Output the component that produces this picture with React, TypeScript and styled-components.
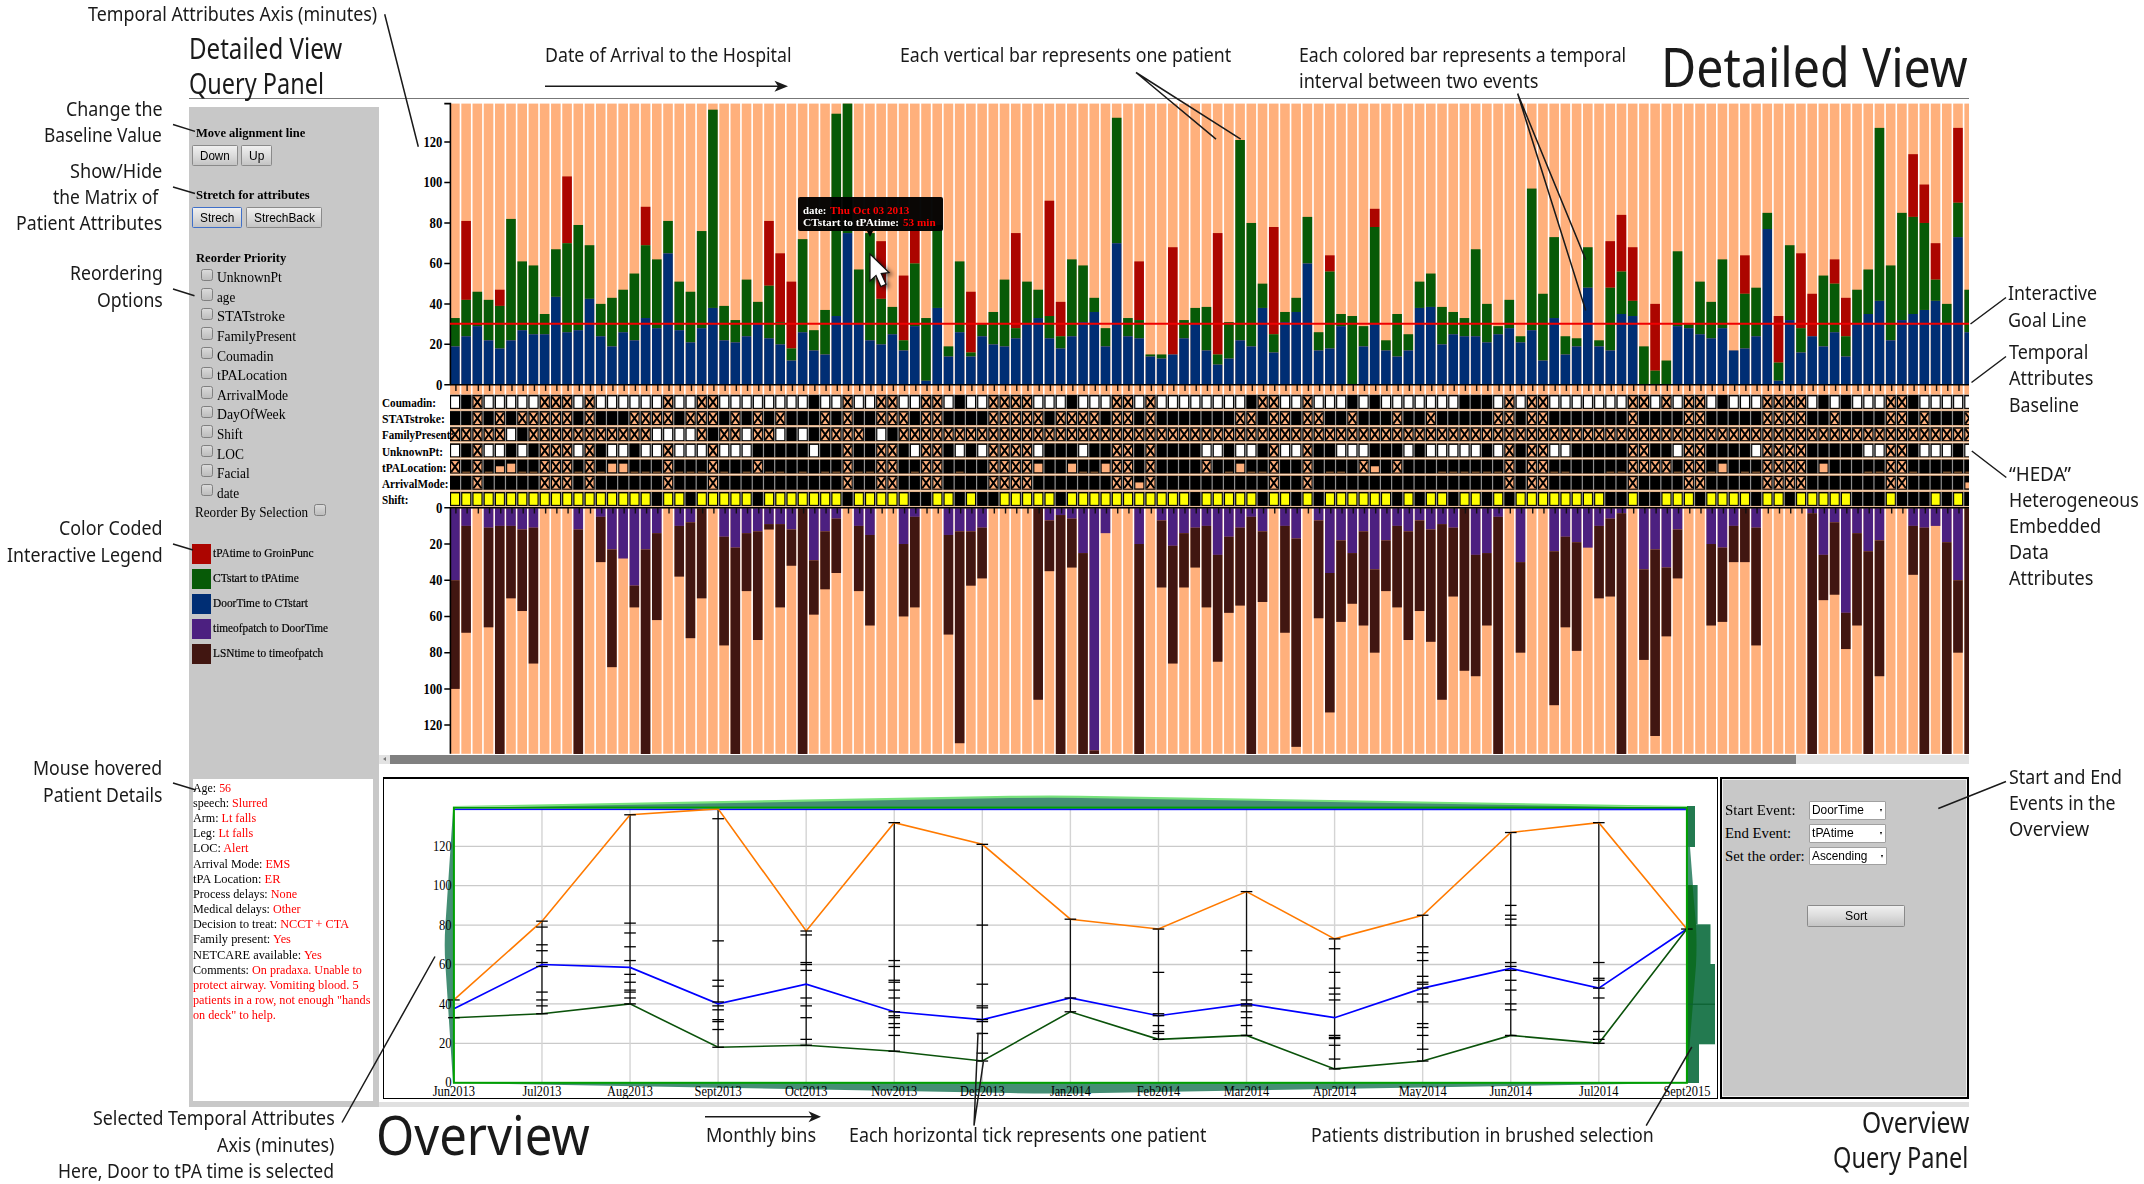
import React, { ReactNode, useLayoutEffect, useRef, useState } from "react";
import styled, { createGlobalStyle } from "styled-components";

const SERIF = '"Liberation Serif", "Times New Roman", serif';
const SANS = '"Liberation Sans", Arial, sans-serif';
const LABEL = '"Noto Sans", "Open Sans", sans-serif';

const C = {
  tan: "#ffb07c",
  red: "#ac0500",
  green: "#075a07",
  blue: "#002e74",
  purple: "#4c2080",
  brown: "#411611",
  panel: "#c8c8c8",
  ink: "#1a1a1a",
};

const Global = createGlobalStyle`
  * { box-sizing: border-box; }
  html, body { margin: 0; padding: 0; background: #fff; }
  body { width: 2144px; height: 1184px; overflow: hidden; }
`;

/* ---------- text set to a given measure ---------- */

const FitBox = styled.span<{ $w: number }>`
  display: inline-block;
  width: ${(p) => p.$w}px;
  white-space: pre;
  flex: none;
`;
const FitInner = styled.span`
  display: inline-block;
  transform-origin: 0 50%;
`;

function Fit({ w, children }: { w: number; children: ReactNode }) {
  const ref = useRef<HTMLSpanElement>(null);
  const [k, setK] = useState(1);
  useLayoutEffect(() => {
    if (ref.current) setK(w / ref.current.offsetWidth);
  }, [w]);
  return (
    <FitBox $w={w}>
      <FitInner ref={ref} style={{ transform: `scaleX(${k})` }}>
        {children}
      </FitInner>
    </FitBox>
  );
}

/* ---------- patient data, in minutes ---------- */

// door to CT, door to tPA, door to groin puncture
const ABOVE =
  "19,33 24,42,81 29,46 22,42 18,39,47 22,82 27,61 25,59 25,35 43.5,67 " +
  "26,70,103 27,79 42.5,69 24,40 19,43 26,47 22,55 33,69,88 28,62 65,81 " +
  "27,51 21,46 28,76 38,136 22,39 21,32 24,52 30,41 23,49,81 20,31,65 " +
  "12,18,51 26,72 17,27 15,37 34,134 75,139 30,57 22,75 20,42.5,71 25,38.5 " +
  "17,22,54 29,60,81 2,33 38,79 14,19 26,61 14,16,46 24,30 20,36 19,52 " +
  "23,28,75 30,51 33,47 23,34,91 18,24,41 24,62 31,59 36,43 19,28 70,132 " +
  "24,33 23,32,61 14,15 13,15 15,15,68 23,32 30,38 17,38.5 10,15,75 13,31 " +
  "22,121 19,80 38,50 16,25,78 31,36 36,43 60,83 17,26 18,56,64 29,35 " +
  "0,34 19,29 30,78,87 17,22 14,35 17,25 38,51 38.5,55 20,38.5 25,36 " +
  "24,33 24,67 21,40 25,29 28,42 21,24 27,97 12,45 33,73 15,24 " +
  "19,23 48,68 19,22 17,48,71 35,56,84 34,41.5,68 0,19 0,7,40 0,12 29,66 " +
  "28,30 25,51 23,41 28,62 17,17 18,45,64 24,48 77,85 2,11,34 32,69 " +
  "16,28,65 24,24,45 19,54 26,50,62 14,24,43 30,47 35,57 41.5,127 22,59 32,85 " +
  "35,83,114 37,80,99 41.5,52,70 30,40 73,90,127 26,47";

// patch to door, last seen normal to door
const BELOW =
  "40,100 10,69 - 11,66 10,136 10,50 12,57 11,86 - - " +
  "- 12,136 - 5,30 23,88 28,28 43,55 23,136 14,62 - " +
  "10,38 8,72 0,50 - 16,76 22,136 14,46 13,73 9,12 9,55 " +
  "12,32 0,136 29,59 13,45 6,36 - 10,46 15,65 - - " +
  "20,60 5,55 - - 15,70 13,130 13,43 11,39 - - " +
  "- - 0,106 7,35 4,136 6,33 25,136 134,136 14,14 - " +
  "- 20,136 - 7,44 21,86 14,44 11,33 10,55 26,85 16,58 " +
  "11,54 5,136 13,52 - 10,69 17,132 - 7,61 36,113 18,63 " +
  "25,53 13,65 34,80 18,46 10,55 13,73 7,57 12,74 9,106 11,49 " +
  "0,90 26,93 25,65 5,136 - 30,80 - - 24,109 16,66 " +
  "19,79 22,22 10,50 6,49 3,136 - 34,84 23,126 33,71 12,39 " +
  "- - 20,65 22,63 10,30 0,30 11,76 - - - " +
  "- 3,136 26,51 8,48 58,78 14,65 24,136 18,93 - - " +
  "10,37 11,136 10,10 19,136 40,80 0,136";

// W yes, B no, X missing, Y day shift, _ lowest level, s and t partial levels
const MATRIX: [string, number, string][] = [
  ["Coumadin:", 54,
    "WBXWWWWWXX" + "XWXWWWWWWX" + "WWXXWWWWWW" + "WWBWWXWWXX" + "WWXXWBWWXX" + "XXWWWBWWWX" +
    "XWXWWWWWWW" + "WBXXWWXWWW" + "BWBWWWWWWW" + "BBBWXWXXWW" + "WWWWWXXWXW" + "XXWBWWWXXX" + "XWBWBWWWXX" + "BWWWWW"],
  ["STATstroke:", 63,
    "BBXBXBXXXX" + "XBXBBBXXXX" + "BXXXBXBXBX" + "BBBXBXBBXX" + "XBXXBBBBXX" + "XXXBXXXXBX" +
    "XBXBBBBBBB" + "XXBXXBXXBB" + "XBBBXBBXBB" + "BBBXXBXXBB" + "BBBBBXBBBB" + "XXBBBBBXXX" + "XBBXBBBBXX" + "BXBBBX"],
  ["FamilyPresent:", 72,
    "XXXXXWBXXX" + "XXXXXXXXWW" + "WWXBXXWXXW" + "BWBXXXXBWB" + "X".repeat(96)],
  ["UnknownPt:", 61,
    "WBXWWBWBXX" + "XWXBWWBWWX" + "WWWXWWWBBB" + "BBWBBXBBXX" + "BWXXBWBWXX" + "XXWBBBWBBX" +
    "XBXBBBBWWB" + "WWBXWWXBBW" + "WWBBBWBWWW" + "WWBWXBXXWW" + "BBBBBXXBBW" + "XXBBBBWXXX" + "XBBBBBWWXX" + "BWWWBW"],
  ["tPALocation:", 64.5,
    "X_X_st__XX" + "X_X_tt___X" + "___X_B_X__" + "B_B__X__XX" + "B_XXB_BBXX" + "XXtBBt__tX" +
    "XBXBBBBXB_" + "t__XBBXB__" + "BXsBXBBB__" + "____XBXX__" + "BBB__XXXX_" + "XX_tB__XXX" + "XBtBBB__XX" + "_BB___"],
  ["ArrivalMode:", 66.5,
    "BBXBBBBBXX" + "XBXBBBBBBX" + "BBBXBBBBBB" + "BBBBBXBBXX" + "BBXXBBBBXX" + "XXBBBBBBBX" +
    "XsXBBBBBBB" + "BBBXBBXBBB" + "BBBBBBBBBB" + "BBBBXBXXBB" + "BBBBBXBBBB" + "XXBBBBBXXX" + "XBBBBBBBXX" + "BBBBBs"],
  ["Shift:", 26.5,
    "YYYYYYYYYY" + "YYYYYYYYBY" + "YBYYYYYBYY" + "YYYYYBYYYY" + "YBBYYBYBBY" + "YYYYBYYYYY" +
    "YYYYYYBYYY" + "YYBYYBYBYY" + "YYYYBYBYYB" + "YYBYBYYYYY" + "YYYBBYBBYY" + "YBYYYYBYYB" + "YYYYYBBBYB" + "BBYBYB"],
];

const above = ABOVE.split(" ").map((s) => s.split(",").map(Number));
const below = BELOW.split(" ").map((s) => (s === "-" ? [0, 0] : s.split(",").map(Number)));

/* ---------- detailed view ---------- */

const X0 = 450.1;
const PITCH = 11.217;
const BAR = 9.6;
const UP0 = 384.8;
const UPK = 2.023;
const DN0 = 507.8;
const DNK = 1.811;
const ROW0 = 395;
const ROWH = 16.17;
const colX = (i: number) => X0 + i * PITCH;

const ChartSvg = styled.svg`
  display: block;
  width: 1590px;
  height: 655px;
`;
const AxisText = styled.text`
  font: bold 14px ${SERIF};
  text-anchor: end;
`;
const RowText = styled.text`
  font: bold 12.4px ${SERIF};
`;

function Cell({ kind, x, y }: { kind: string; x: number; y: number }) {
  const fill = kind === "W" ? "#fff" : kind === "Y" ? "#ff0" : kind === "X" ? C.tan : "#000";
  return (
    <g>
      <rect x={x - 0.1} y={y} width={10} height={14} fill="#000" />
      {"WYX".includes(kind) && <rect x={x + 1} y={y + 1.4} width={7.9} height={11.4} fill={fill} />}
      {kind === "X" && (
        <path
          d={`M${x + 1} ${y + 1.8}l7.8 10.6M${x + 8.8} ${y + 1.8}l-7.8 10.6`}
          stroke="#000"
          strokeWidth={2}
        />
      )}
      {kind === "_" && <rect x={x + 1} y={y + 12} width={7.8} height={1} fill="#a8703f" />}
      {kind === "s" && <rect x={x + 1} y={y + 6.6} width={8} height={6} fill={C.tan} />}
      {kind === "t" && <rect x={x + 1} y={y + 4} width={8} height={8.6} fill={C.tan} />}
    </g>
  );
}

function DetailedChart() {
  return (
    <ChartSvg viewBox="379 99 1590 655">
      {above.map(([b, g, r], i) => {
        const x = colX(i);
        const y = (v: number) => UP0 - v * UPK;
        return (
          <g key={i}>
            <rect x={x} y={103.6} width={BAR} height={650.2} fill={C.tan} />
            {r !== undefined && <rect x={x} y={y(r)} width={BAR} height={(r - g) * UPK} fill={C.red} />}
            {g > b && <rect x={x} y={y(g)} width={BAR} height={(g - b) * UPK} fill={C.green} />}
            {b > 0 && <rect x={x} y={y(b)} width={BAR} height={b * UPK} fill={C.blue} />}
          </g>
        );
      })}
      {below.map(([p, n], i) => (
        <g key={i}>
          {p > 0 && <rect x={colX(i)} y={DN0} width={BAR} height={p * DNK} fill={C.purple} />}
          {n > p && <rect x={colX(i)} y={DN0 + p * DNK} width={BAR} height={(n - p) * DNK} fill={C.brown} />}
        </g>
      ))}
      <rect x={450} y={394.5} width={1519} height={112.5} fill="#909090" />
      {MATRIX.map(([name, w, row], r) => (
        <g key={name}>
          {row.split("").map((k, i) => (
            <Cell key={i} kind={k} x={colX(i)} y={ROW0 + r * ROWH} />
          ))}
          <rect x={450} y={ROW0 + r * ROWH + 13.9} width={1519} height={2.3} fill="#c98a5c" />
          <rect x={450} y={ROW0 + r * ROWH + 14.4} width={1519} height={1.2} fill="#ffe2c4" />
          <RowText x={382} y={407 + r * ROWH} textLength={w} lengthAdjust="spacingAndGlyphs">
            {name}
          </RowText>
        </g>
      ))}
      {above.map((_, i) => (
        <path
          key={i}
          d={`M${colX(i) + 5.8} ${UP0}v6.2M${colX(i) + 5.8} ${DN0}v5.6`}
          stroke="#111"
          strokeWidth={1.4}
        />
      ))}
      <path d={`M450 ${UP0}H1969M450 ${DN0}H1969`} stroke="#000" strokeWidth={1.6} />
      <path d={`M444.3 103.6H450.4V${UP0}M450.4 ${DN0}V753.8`} stroke="#000" strokeWidth={1.6} fill="none" />
      {[0, 20, 40, 60, 80, 100, 120].map((v) => {
        const len = v > 99 ? 18.8 : v ? 12.8 : 6.4;
        return (
          <g key={v}>
            <path d={`M444.3 ${UP0 - v * UPK}h6M444.3 ${DN0 + v * DNK}h6`} stroke="#000" strokeWidth={1.5} />
            <AxisText x={442.3} y={UP0 - v * UPK + 4.8} textLength={len} lengthAdjust="spacingAndGlyphs">{v}</AxisText>
            <AxisText x={442.3} y={DN0 + v * DNK + 4.8} textLength={len} lengthAdjust="spacingAndGlyphs">{v}</AxisText>
          </g>
        );
      })}
      <path d="M450 323.8H1969" stroke="#f00000" strokeWidth={2} />
    </ChartSvg>
  );
}

/* ---------- overview ---------- */

const MONTHS: { name: string; w: number; max: number; med: number; min: number; ticks: number[] }[] = [
  { name: "Jun2013", w: 42.5, max: 42, med: 37.5, min: 33, ticks: [42, 33] },
  { name: "Jul2013", w: 39, max: 82, med: 60, min: 35, ticks: [82, 79, 70, 67, 61, 59, 46, 42, 39, 35] },
  { name: "Aug2013", w: 46, max: 136, med: 58.5, min: 40, ticks: [136, 81, 76, 69, 62, 55, 51, 47, 46, 43, 40] },
  { name: "Sept2013", w: 47, max: 139, med: 40, min: 18, ticks: [134, 72, 52, 49, 41, 39, 37, 32, 31, 27, 18] },
  { name: "Oct2013", w: 42.5, max: 77, med: 50, min: 19, ticks: [77, 75, 61, 60, 57, 43, 39, 33, 22, 19] },
  { name: "Nov2013", w: 46, max: 132, med: 36, min: 16, ticks: [132, 62, 59, 52, 51, 47, 43, 36, 34, 33, 30, 28, 24, 16] },
  { name: "Dec2013", w: 44.5, max: 121, med: 32, min: 11, ticks: [121, 80, 50, 39, 38, 32, 31, 25, 15, 11] },
  { name: "Jan2014", w: 41, max: 83, med: 43, min: 36, ticks: [83, 43, 36] },
  { name: "Feb2014", w: 43.5, max: 78, med: 34, min: 22, ticks: [78, 56, 35, 34, 29, 26, 25, 22] },
  { name: "Mar2014", w: 45.5, max: 97, med: 40, min: 24, ticks: [97, 67, 55, 51, 42, 40, 39, 36, 33, 29, 24] },
  { name: "Apr2014", w: 43.5, max: 73, med: 33, min: 7, ticks: [73, 68, 56, 48, 45, 42, 24, 23, 22.4, 19, 12, 7] },
  { name: "May2014", w: 48, max: 85, med: 48, min: 11, ticks: [85, 69, 66, 62, 54, 51, 50, 48, 45, 41, 30, 28, 24, 17, 11] },
  { name: "Jun2014", w: 42.5, max: 127, med: 58, min: 24, ticks: [127, 90, 85, 83, 80, 61, 59, 57, 52, 47, 40, 37, 24] },
  { name: "Jul2014", w: 39.5, max: 132, med: 48, min: 20, ticks: [132, 61, 53, 52, 48, 43, 26, 22, 20] },
  { name: "Sept2015", w: 47, max: 78, med: 78, min: 78, ticks: [78] },
];

const mx = (i: number) => 453.9 + i * 88.07;
const my = (v: number) => 1082.7 - v * 1.97;
const line = (key: "max" | "med" | "min") => MONTHS.map((m, i) => `${mx(i)},${my(m[key])}`).join(" ");

const OverviewFrame = styled.div`
  width: 1335px;
  height: 322px;
  border: solid #000;
  border-width: 2px 1px 1px 1px;
`;
const OverviewSvg = styled.svg`
  display: block;
  width: 1333px;
  height: 319px;
`;
const OvText = styled.text<{ $end?: boolean }>`
  font: 13.8px ${SERIF};
  text-anchor: ${(p) => (p.$end ? "end" : "middle")};
`;

const DISTRIBUTION: [number, number, number][] = [
  [806, 41, 1695], [885, 39.5, 1697.6], [924.3, 40.5, 1710.5], [964, 40, 1715], [1004, 40.3, 1715], [1043, 40, 1699],
];

function OverviewChart() {
  return (
    <OverviewSvg viewBox="384 779 1333 319">
      {[20, 40, 60, 80, 100, 120].map((v) => (
        <path key={v} d={`M454 ${my(v)}H1687`} stroke="#cacaca" strokeWidth={1.3} />
      ))}
      {MONTHS.map((m, i) => (
        <path key={m.name} d={`M${mx(i)} 809V1083`} stroke="#d4d4d4" strokeWidth={1.4} />
      ))}
      <path d="M454 806L1010 795.8Q1060 795 1110 796.2L1687 806z" fill="#78e27c" />
      <path d="M454 808L1010 798Q1060 797.2 1110 798.4L1687 808z" fill="#448e74" />
      <path d="M454 1083L1010 1093Q1050 1094 1100 1093L1687 1083z" fill="#448e74" />
      <path d="M453 810L445.4 925Q444 945 445.4 965L453 1083z" fill="#448e74" />
      <path d="M1687 808L1691 860L1696 925Q1697 945 1696 965L1690 1040L1687 1083z" fill="#448e74" />
      {DISTRIBUTION.map(([y, h, x]) => (
        <rect key={y} x={1687} y={y} width={x - 1687} height={h} fill="#237a50" />
      ))}
      <path d="M1687 885V1083L1690 1040L1696 965Q1697 945 1696 925L1692.5 885z" fill="#0d6c24" />
      <path d="M1687 1004.2H1715" stroke="#0b6030" strokeWidth={1.2} />
      {MONTHS.map((m, i) => (
        <OvText key={m.name} x={mx(i)} y={1096} textLength={m.w} lengthAdjust="spacingAndGlyphs">
          {m.name}
        </OvText>
      ))}
      {[0, 20, 40, 60, 80, 100, 120].map((v) => (
        <OvText key={v} $end x={451.6} y={my(v) + 4.6} textLength={v > 99 ? 18.6 : v ? 12.6 : 6.4} lengthAdjust="spacingAndGlyphs">
          {v}
        </OvText>
      ))}
      <path d="M454 809L1687 808.6V809.8L454 809.6z" fill="#00f" stroke="#00f" strokeWidth={0.9} />
      {MONTHS.map((m, i) => (
        <g key={m.name} stroke="#111">
          {i > 0 && i < 14 && <path d={`M${mx(i)} ${my(m.max)}V${my(m.min)}`} strokeWidth={1.3} />}
        </g>
      ))}
      <polyline points={line("max")} fill="none" stroke="#ff7a00" strokeWidth={1.6} />
      <polyline points={line("med")} fill="none" stroke="#0000ff" strokeWidth={1.7} />
      <polyline points={line("min")} fill="none" stroke="#0a520a" strokeWidth={1.6} />
      {MONTHS.map((m, i) =>
        m.ticks.map((v) => (
          <path key={`${i}-${v}`} d={`M${mx(i) - 5.8} ${my(v)}h11.6`} stroke="#000" strokeWidth={1.3} />
        )),
      )}
      <rect x={453.9} y={807.6} width={1233} height={275.2} fill="none" stroke="#00a000" strokeWidth={2} />
    </OverviewSvg>
  );
}

/* ---------- shell ---------- */

const Page = styled.div`
  position: relative;
  width: 2144px;
  height: 1184px;
  padding: 98px 0 0 189px;
  overflow: hidden;
  background: #fff;
  color: #000;
`;
const Shell = styled.div`
  width: 1780px;
  border-top: 1px solid #777;
  display: grid;
  grid-template-columns: 190px 1590px;
`;
const Sidebar = styled.aside`
  height: 1000px;
  margin-top: 8px;
  padding: 18px 0 0 3px;
  background: ${C.panel};
  display: flex;
  flex-direction: column;
  font-family: ${SERIF};
`;
const Heading = styled.h3`
  margin: 0;
  padding-left: 4px;
  height: 16px;
  font-size: 13px;
  line-height: 16px;
  font-weight: bold;
`;
const ButtonRow = styled.div<{ $after: number }>`
  display: flex;
  gap: 3.6px;
  margin: 4px 0 ${(p) => p.$after}px;
`;
const Button = styled.button<{ $w: number; $focus?: boolean }>`
  width: ${(p) => p.$w}px;
  height: 21.4px;
  padding: 0;
  border: 1px solid ${(p) => (p.$focus ? "#3f6fc8" : "#8a8a8a")};
  border-radius: 1.5px;
  background: linear-gradient(#f0f0f0, #dedede 45%, #c4c4c4);
  font: 12.8px/20px ${SANS};
  color: #000;
  text-align: center;
`;
const Options = styled.div`
  padding-top: 1.6px;
  display: flex;
  flex-direction: column;
`;
const OptionRow = styled.label<{ $trailing?: boolean }>`
  height: 19.6px;
  display: flex;
  align-items: flex-start;
  gap: ${(p) => (p.$trailing ? 6.5 : 4.4)}px;
  padding-left: ${(p) => (p.$trailing ? 2.5 : 9)}px;
  font-size: 14.2px;
  line-height: 20.6px;
`;
const Check = styled.span`
  flex: none;
  width: 11.5px;
  height: 12.4px;
  margin-top: 1.4px;
  border: 1px solid #7f7f7f;
  border-radius: 2.5px;
  background: linear-gradient(#dadada, #bdbdbd);
`;
const Legend = styled.ul`
  list-style: none;
  margin: 22.2px 0 0;
  padding: 0;
  display: flex;
  flex-direction: column;
  gap: 5.57px;
`;
const LegendItem = styled.li`
  height: 19.5px;
  display: flex;
  gap: 2.5px;
  font-size: 12.2px;
  line-height: 19.5px;
  -webkit-text-stroke: 0.2px #000;
`;
const Swatch = styled.span<{ $c: string }>`
  width: 18.6px;
  height: 19.5px;
  background: ${(p) => p.$c};
`;
const Details = styled.div`
  width: 180px;
  height: 322px;
  margin: auto 0 6px 1.4px;
  padding-top: 0.6px;
  background: #fff;
  font-size: 13px;
  line-height: 15.2px;
`;
const DetailLine = styled.div`
  height: 15.2px;
`;
const Value = styled.span`
  color: #f00;
`;

const Main = styled.main`
  display: flex;
  flex-direction: column;
`;
const Scrollbar = styled.div`
  height: 9.6px;
  margin-top: 0.6px;
  background: #e2e2e2;
  display: flex;
  align-items: center;
`;
const ScrollArrow = styled.span`
  width: 11px;
  &::before {
    content: "";
    display: block;
    margin-left: 4px;
    width: 0;
    border: 2px solid transparent;
    border-left: 0;
    border-right: 3px solid #777;
  }
`;
const Thumb = styled.span`
  width: 1406px;
  height: 8.4px;
  background: #808080;
`;
const OverviewRow = styled.section`
  display: flex;
  gap: 2px;
  margin: 12.8px 0 0 4px;
`;
const QueryPanel = styled.section`
  width: 249px;
  height: 322px;
  border: 2px solid #000;
  outline: 1px solid #f0f0f0;
  outline-offset: -3px;
  background: ${C.panel};
  padding: 22px 0 0 3px;
  font: 14.8px ${SERIF};
`;
const Field = styled.div`
  height: 22.8px;
  display: grid;
  grid-template-columns: 84px auto;
  line-height: 19px;
`;
const Select = styled.span<{ $w: number }>`
  width: ${(p) => p.$w}px;
  height: 18.5px;
  margin-top: 0.3px;
  padding: 0 3px 0 2px;
  border: 1px solid #a0a0a0;
  border-radius: 1px;
  background: #fff;
  display: flex;
  justify-content: space-between;
  align-items: center;
  font: 12.6px/16.5px ${SANS};
`;
const Caret = styled.i`
  border: 1.8px solid transparent;
  border-top: 3px solid #000;
  border-bottom: 0;
`;
const SortWrap = styled.div`
  padding: 36px 0 0 82px;
`;
const Strip = styled.div`
  height: 5px;
  margin-top: 3px;
  background: #e0e0e0;
`;

/* ---------- tooltip and pointer over the chart ---------- */

const Tooltip = styled.div`
  position: absolute;
  left: 798px;
  top: 197px;
  width: 145px;
  height: 34px;
  padding: 6.8px 0 0 5px;
  border-radius: 2px;
  background: rgba(0, 0, 0, 0.96);
  color: #fff;
  font: bold 11px/12.4px ${SERIF};
  &::after {
    content: "";
    position: absolute;
    left: 69px;
    top: 34px;
    border: 3.5px solid transparent;
    border-top: 6px solid #000;
    border-bottom: 0;
  }
`;
const TipLine = styled.div`
  display: flex;
  gap: 3.6px;
  height: 12.4px;
`;
const Pointer = styled.svg`
  position: absolute;
  left: 866px;
  top: 250px;
  overflow: visible;
  filter: drop-shadow(3px 2px 2px rgba(0, 0, 0, 0.6));
`;

/* ---------- callouts ---------- */

const Leaders = styled.svg`
  position: absolute;
  left: 0;
  top: 0;
  pointer-events: none;
`;
const CalloutBox = styled.div<{ $x: number; $top: number; $size: number; $lead: number; $right?: boolean }>`
  position: absolute;
  ${(p) => (p.$right ? `right: ${2144 - p.$x}px;` : `left: ${p.$x}px;`)}
  top: ${(p) => p.$top}px;
  display: flex;
  flex-direction: column;
  align-items: ${(p) => (p.$right ? "flex-end" : "flex-start")};
  font: ${(p) => p.$size}px/${(p) => p.$lead}px ${LABEL};
  color: ${C.ink};
`;

interface CalloutProps {
  x: number;
  base: number;
  lines: [string, number][];
  size?: number;
  lead?: number;
  right?: boolean;
}
// x is the aligned edge, base the baseline of the first line
function Callout({ x, base, lines, size = 20, lead = 26.2, right }: CalloutProps) {
  return (
    <CalloutBox $x={x} $top={base - lead / 2 - 0.345 * size} $size={size} $lead={lead} $right={right}>
      {lines.map(([t, w]) => (
        <Fit key={t} w={w}>{t}</Fit>
      ))}
    </CalloutBox>
  );
}

const LEADERS =
  "M384.7 14.3L418.3 146.7M173 124.5L195 131.4M173 187L195 193.5M173 289L194.5 295.7M173 544L193 550" +
  "M173 783L196 790M342 1122.5L435 956.5M974 1125.7L978 1033.5H982M974 1125.7L983.4 1061.7" +
  "M1646.2 1125.7L1691.8 1047M2006 781.5L1938.3 808.5M2006 297.5L1970.5 324M2006 356.5L1971.5 382.5" +
  "M2006.3 477.5L1971.8 451M1136 72.5L1216 139.2M1136 72.5L1240.7 139.2M1517.7 93.8L1585.7 259.6M1517.7 93.8L1585.7 310.5" +
  "M545 86.3H778M705 1116.7H812";

const OPTIONS: [string, number][] = [
  ["UnknownPt", 65], ["age", 18.5], ["STATstroke", 67.5], ["FamilyPresent", 79], ["Coumadin", 56.5],
  ["tPALocation", 70], ["ArrivalMode", 71], ["DayOfWeek", 69], ["Shift", 26], ["LOC", 26.5], ["Facial", 33], ["date", 22.5],
];
const LEGEND: [string, number, string][] = [
  ["tPAtime to GroinPunc", 100.7, C.red],
  ["CTstart to tPAtime", 86, C.green],
  ["DoorTime to CTstart", 95.3, C.blue],
  ["timeofpatch to DoorTime", 115, C.purple],
  ["LSNtime to timeofpatch", 109.7, C.brown],
];
const DETAILS: [string, string, number][] = [
  ["Age:", " 56", 38.5], ["speech:", " Slurred", 75], ["Arm:", " Lt falls", 63.3], ["Leg:", " Lt falls", 60],
  ["LOC:", " Alert", 55.5], ["Arrival Mode:", " EMS", 97.5], ["tPA Location:", " ER", 87.3],
  ["Process delays:", " None", 104], ["Medical delays:", " Other", 108], ["Decision to treat:", " NCCT + CTA", 156],
  ["Family present:", " Yes", 98], ["NETCARE available:", " Yes", 128.5], ["Comments:", " On pradaxa. Unable to", 169],
  ["", "protect airway. Vomiting blood. 5", 165.5], ["", 'patients in a row, not enough "hands', 177.5],
  ["", 'on deck" to help.', 82.5],
];

export default function App() {
  return (
    <Page>
      <Global />
      <Shell>
        <Sidebar>
          <Heading><Fit w={109}>Move alignment line</Fit></Heading>
          <ButtonRow $after={20.4}>
            <Button $w={45.8}><Fit w={30}>Down</Fit></Button>
            <Button $w={30.8}><Fit w={15}>Up</Fit></Button>
          </ButtonRow>
          <Heading><Fit w={113.5}>Stretch for attributes</Fit></Heading>
          <ButtonRow $after={21.4}>
            <Button $w={50.2} $focus><Fit w={34.3}>Strech</Fit></Button>
            <Button $w={76.6}><Fit w={60.5}>StrechBack</Fit></Button>
          </ButtonRow>
          <Heading><Fit w={90}>Reorder Priority</Fit></Heading>
          <Options>
            {OPTIONS.map(([t, w]) => (
              <OptionRow key={t}><Check /><Fit w={w}>{t}</Fit></OptionRow>
            ))}
            <OptionRow $trailing><Fit w={113}>Reorder By Selection</Fit><Check /></OptionRow>
          </Options>
          <Legend>
            {LEGEND.map(([t, w, c]) => (
              <LegendItem key={t}><Swatch $c={c} /><Fit w={w}>{t}</Fit></LegendItem>
            ))}
          </Legend>
          <Details>
            {DETAILS.map(([k, v, w]) => (
              <DetailLine key={k + v}><Fit w={w}>{k}<Value>{v}</Value></Fit></DetailLine>
            ))}
          </Details>
        </Sidebar>
        <Main>
          <DetailedChart />
          <Scrollbar><ScrollArrow /><Thumb /></Scrollbar>
          <OverviewRow>
            <OverviewFrame><OverviewChart /></OverviewFrame>
            <QueryPanel>
              <Field><Fit w={70.3}>Start Event:</Fit><Select $w={77.4}><Fit w={52}>DoorTime</Fit><Caret /></Select></Field>
              <Field><Fit w={66}>End Event:</Fit><Select $w={77.4}><Fit w={41.5}>tPAtime</Fit><Caret /></Select></Field>
              <Field><Fit w={80}>Set the order:</Fit><Select $w={78.4}><Fit w={55.5}>Ascending</Fit><Caret /></Select></Field>
              <SortWrap><Button $w={98}><Fit w={22}>Sort</Fit></Button></SortWrap>
            </QueryPanel>
          </OverviewRow>
          <Strip />
        </Main>
      </Shell>

      <Tooltip>
        <TipLine><Fit w={23.5}>date:</Fit><Value><Fit w={79.5}>Thu Oct 03 2013</Fit></Value></TipLine>
        <TipLine><Fit w={96.3}>CTstart to tPAtime:</Fit><Value><Fit w={32.5}>53 min</Fit></Value></TipLine>
      </Tooltip>
      <Pointer width="30" height="40">
        <path d="M4 4V31L10 25.4L14.8 36.6L20 34.2L15.2 23.6L23 22.6Z" fill="#fff" stroke="#111" strokeWidth="1.2" />
      </Pointer>

      <Leaders width="2144" height="1184">
        <path d={LEADERS} fill="none" stroke={C.ink} strokeWidth="1.5" />
        <path d="M788 86.3L774.5 80.8L778 86.3L774.5 91.8zM821 1116.7L808.5 1111.2L812 1116.7L808.5 1122.2z" fill={C.ink} />
      </Leaders>

      <Callout x={88} base={20.6} size={19.4} lines={[["Temporal Attributes Axis (minutes)", 289]]} />
      <Callout x={188.5} base={58.8} size={28.5} lead={35} lines={[["Detailed View", 153], ["Query Panel", 135]]} />
      <Callout x={545} base={62} lines={[["Date of Arrival to the Hospital", 246.5]]} />
      <Callout x={900} base={62} lines={[["Each vertical bar represents one patient", 331]]} />
      <Callout x={1299} base={62} lead={26} lines={[["Each colored bar represents a temporal", 327], ["interval between two events", 239]]} />
      <Callout x={1968} right base={85.2} size={55} lead={60} lines={[["Detailed View", 307]]} />
      <Callout x={162} right base={115.7} lines={[["Change the", 96.5], ["Baseline Value", 118]]} />
      <Callout x={162} right base={178} lines={[["Show/Hide", 92.5]]} />
      <Callout x={158} right base={204} lines={[["the Matrix of", 105.5]]} />
      <Callout x={162} right base={230} lines={[["Patient Attributes", 146]]} />
      <Callout x={162} right base={280.4} lead={26.6} lines={[["Reordering", 92.5], ["Options", 65.5]]} />
      <Callout x={162} right base={534.6} lead={27} lines={[["Color Coded", 103.5], ["Interactive Legend", 155.5]]} />
      <Callout x={162} right base={774} lead={27} lines={[["Mouse hovered", 129.5], ["Patient Details", 119.5]]} />
      <Callout x={334} right base={1125.4} lead={26.4} lines={[["Selected Temporal Attributes", 241.5], ["Axis (minutes)", 117.5], ["Here, Door to tPA time is selected", 276]]} />
      <Callout x={376} base={1153} size={55} lead={60} lines={[["Overview", 214]]} />
      <Callout x={706} base={1142} lines={[["Monthly bins", 110]]} />
      <Callout x={849} base={1142} lines={[["Each horizontal tick represents one patient", 357]]} />
      <Callout x={1311} base={1142} lines={[["Patients distribution in brushed selection", 343]]} />
      <Callout x={1968.5} right base={1132} size={28.5} lead={35.2} lines={[["Overview", 107], ["Query Panel", 135.5]]} />
      <Callout x={2009} base={784} lines={[["Start and End", 113], ["Events in the", 107], ["Overview", 80]]} />
      <Callout x={2008} base={300.3} lines={[["Interactive", 89], ["Goal Line", 79]]} />
      <Callout x={2009} base={359.2} lines={[["Temporal", 79], ["Attributes", 84], ["Baseline", 70]]} />
      <Callout x={2009} base={480.8} lead={26.1} lines={[["“HEDA”", 62], ["Heterogeneous", 130], ["Embedded", 92.5], ["Data", 39.5], ["Attributes", 84]]} />
    </Page>
  );
}
